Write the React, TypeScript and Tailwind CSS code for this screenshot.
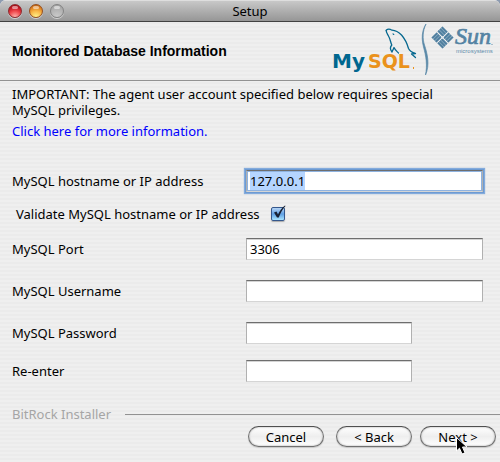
import { useEffect, useRef, type ReactNode } from "react";

const inputBase =
  "block h-[22px] border border-t-[#6e6e6e] border-x-[#b0b0b0] border-b-[#d5d5d5] bg-white px-[3px] text-[13px] text-black outline-none selection:bg-[#b5d5ff] selection:text-black";
const plainShadow = "shadow-[inset_0_1px_0_#d4d4d4]";

function TrafficLight({ label, className }: { label: string; className: string }) {
  return (
    <button
      type="button"
      aria-label={label}
      className={`relative h-3.5 w-3.5 rounded-full border shadow-[0_1px_0_#d0d0d0] ${className}`}
    >
      <span className="absolute top-px left-[3px] h-[3px] w-1.5 rounded-full bg-white/50" />
    </button>
  );
}

function Field({ id, label, children }: { id: string; label: string; children: ReactNode }) {
  return (
    <div className="flex h-[22px] items-center">
      <label htmlFor={id} className="w-[234px] shrink-0">
        {label}
      </label>
      {children}
    </div>
  );
}

function PushButton({ children }: { children: ReactNode }) {
  return (
    <button
      type="button"
      className="h-[21px] w-[76px] rounded-full border border-[#707070] border-t-[#505050] bg-linear-to-b from-white via-[#eeeeee] to-white text-[13px] leading-[18px] shadow-[inset_0_0_2px_#999999,0_1px_1px_#c8c8c8]"
    >
      {children}
    </button>
  );
}

function Logos() {
  return (
    <svg width="170" height="58" viewBox="330 22 170 58" className="shrink-0" role="img" aria-label="MySQL, Sun microsystems">
      <text x="332" y="68" fontFamily="'DejaVu Sans', sans-serif" fontWeight="700" fontSize="20" fill="#00678f">
        My
      </text>
      <text x="368" y="68" fontFamily="'DejaVu Sans', sans-serif" fontWeight="700" fontSize="19" fill="#ea921c">
        SQL
      </text>
      <rect x="413" y="67" width="1" height="2" fill="#ea921c" />
      <g fill="none" stroke="#06688f" strokeWidth="1.3" strokeLinecap="round" strokeLinejoin="round">
        <path d="M386.200 30.300 C387.500 29 390 29 392 30.200 C396 30.500 399 32.500 401.500 35 C405 39 407 43 408.500 48.500 C409.500 50.500 412 52.500 415.500 53.500 L411.500 54 L415.500 57.500" />
        <path d="M386.200 30.300 C386 33 388 34.500 389 37 C390.500 40 390.500 42.500 391.800 45 C390 47 390 49.500 392 52 L394 47.500 C395 50 397 51.500 398.500 53" />
        <path strokeWidth="1.1" d="M393 33.800 L393.800 34.500" />
      </g>
      <path
        d="M426 24 C422.500 31 422.500 39 424.500 45 C427.500 54 430 65 425.500 75 C427.500 65 426 56 423.500 47 C421.500 39 421.500 31 426 24 Z"
        fill="#5988a7"
        stroke="#5988a7"
        strokeWidth="0.7"
      />
      <g transform="translate(442.500 37.500) rotate(45)" fill="none" stroke="#507f9f" strokeWidth="1.8">
        <path
          d="M-7.500 -7.500 H-0.700 V-0.700 H-7.500 Z M0.700 -7.500 H7.500 V-0.700 H0.700 Z M0.700 0.700 H7.500 V7.500 H0.700 Z M-7.500 0.700 H-0.700 V7.500 H-7.500 Z"
          fill="#8cadc3"
          stroke="#8cadc3"
          strokeWidth="0.6"
        />
        <path d="M-7.800 -6.800 H-0.500 M-7.800 -4.300 H-0.500 M-7.800 -1.800 H-0.500" />
        <path d="M1.800 -7.800 V-0.500 M4.300 -7.800 V-0.500 M6.800 -7.800 V-0.500" />
        <path d="M0.500 1.800 H7.800 M0.500 4.300 H7.800 M0.500 6.800 H7.800" />
        <path d="M-6.800 0.500 V7.800 M-4.300 0.500 V7.800 M-1.800 0.500 V7.800" />
        <circle r="1.200" fill="#e4eaee" stroke="none" />
      </g>
      <text x="455" y="44" fontFamily="'Liberation Serif', serif" fontStyle="italic" fontSize="24" fill="#5483a3" stroke="#5483a3" strokeWidth="0.7">
        Sun
      </text>
      <circle cx="492" cy="44.500" r="0.600" fill="#5483a3" />
      <text x="456" y="53" fontFamily="'Liberation Sans', sans-serif" fontSize="6" fill="#5f8cab">
        microsystems
      </text>
    </svg>
  );
}

export default function App() {
  const hostRef = useRef<HTMLInputElement>(null);

  useEffect(() => {
    hostRef.current?.focus();
    hostRef.current?.select();
  }, []);

  return (
    <div className="min-h-screen bg-[#8d9bb0] font-['Noto_Sans',sans-serif] text-[13px] leading-4 text-black">
      <div className="min-h-screen overflow-hidden rounded-t-md bg-[repeating-linear-gradient(to_bottom,#efefef_0px,#efefef_2px,#ebebeb_2px,#ebebeb_4px)]">
        <header className="grid h-[22px] grid-cols-[1fr_auto_1fr] items-center border-t border-b border-t-[#dedede] border-b-[#424242] bg-linear-to-b from-[#c8c8c8] to-[#969696] px-2">
          <div className="flex gap-[7px]">
            <TrafficLight label="Close" className="border-[#8d2a2e] bg-[radial-gradient(circle_at_50%_100%,#ffb8b0_0px,#f0484c_6px,#c01520_10px,#8a0a10_14px)]" />
            <TrafficLight label="Minimize" className="border-[#965020] bg-[radial-gradient(circle_at_50%_100%,#fff890_0px,#f9b848_6px,#dd8020_10px,#a04a08_14px)]" />
            <TrafficLight label="Zoom" className="border-[#848484] bg-[radial-gradient(circle_at_50%_100%,#cccccc_0px,#b2b2b2_8px,#999999_14px)]" />
          </div>
          <h1>Setup</h1>
        </header>

        <div className="flex h-[58px] items-center justify-between pl-3">
          <h2 className="font-['Liberation_Sans',sans-serif] text-sm leading-4 font-bold">Monitored Database Information</h2>
          <Logos />
        </div>

        <main className="border-t border-[#929292] pt-[5px] pr-[17px] pl-3">
          <p className="pr-6">IMPORTANT: The agent user account specified below requires special MySQL privileges.</p>
          <a href="#information" className="mt-[5px] inline-block text-[#0000ff]">
            Click here for more information.
          </a>

          <form className="mt-[31px]">
            <Field id="host" label="MySQL hostname or IP address">
              <input
                id="host"
                ref={hostRef}
                type="text"
                defaultValue="127.0.0.1"
                className={`${inputBase} min-w-0 flex-1 shadow-[0_0_0_1px_#6d9bd3,0_0_1px_2px_#84abdc,inset_0_0_0_1px_#8fb3e0]`}
              />
            </Field>
            <div className="mt-3.5 flex h-4 items-center gap-[11px] pl-1">
              <label htmlFor="validate">Validate MySQL hostname or IP address</label>
              <span className="relative h-3.5 w-3.5">
                <input
                  id="validate"
                  type="checkbox"
                  defaultChecked
                  className="peer block h-3.5 w-3.5 appearance-none rounded-xs border border-[#35588d] bg-linear-to-b from-[#b5d4f5] via-[#60a0e3] to-[#a9e5ff] shadow-[0_1px_1px_#aaaaaa]"
                />
                <svg viewBox="0 0 16 16" className="pointer-events-none absolute -top-0.5 left-0 hidden h-4 w-4 peer-checked:block">
                  <path d="M3 7.500 L5.500 6.500 L7 9.500 C8.500 6 11 2.500 14 0.500 L14.500 1 C11.500 4 9.500 8 7.800 12.500 H6 Z" fill="#182235" />
                </svg>
              </span>
            </div>
            <div className="mt-4 space-y-5">
              <Field id="port" label="MySQL Port">
                <input id="port" type="text" defaultValue="3306" className={`${inputBase} ${plainShadow} min-w-0 flex-1`} />
              </Field>
              <Field id="username" label="MySQL Username">
                <input id="username" type="text" className={`${inputBase} ${plainShadow} min-w-0 flex-1`} />
              </Field>
              <Field id="password" label="MySQL Password">
                <input id="password" type="password" className={`${inputBase} ${plainShadow} w-[166px]`} />
              </Field>
            </div>
            <div className="mt-4">
              <Field id="reenter" label="Re-enter">
                <input id="reenter" type="password" className={`${inputBase} ${plainShadow} w-[166px]`} />
              </Field>
            </div>
          </form>
        </main>

        <footer className="mt-6 pb-3.5">
          <div className="flex h-4 items-center gap-3.5 pl-3 text-[#a5a5a5]">
            <span>BitRock Installer</span>
            <hr className="flex-1 border-[#929292]" />
          </div>
          <div className="mt-1 flex justify-end gap-2 pr-1">
            <div className="mr-1">
              <PushButton>Cancel</PushButton>
            </div>
            <PushButton>&lt; Back</PushButton>
            <div className="relative">
              <PushButton>Next &gt;</PushButton>
              <svg width="12" height="18" viewBox="0 0 12 18" className="pointer-events-none absolute top-[11px] left-9">
                <path d="M0.500 0.500 V14 L3.500 11.200 L6 17 L9 15.800 L6.500 10 H11 Z" fill="#000000" stroke="#ffffff" />
              </svg>
            </div>
          </div>
        </footer>
      </div>
    </div>
  );
}
